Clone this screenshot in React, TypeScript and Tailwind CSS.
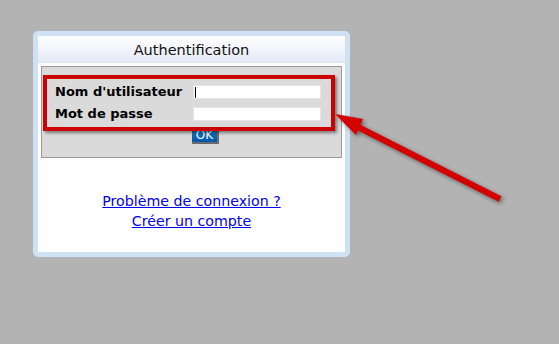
import React from 'react';

const LoginBox: React.FC = () => {
  return (
    <div className="w-[317px] h-[226px] border-[5px] border-[#cfe1f4] rounded-[5px] bg-white">
      <div className="h-[27px] bg-gradient-to-b from-white to-[#e4e9f6] border-b border-[#dfe4f1] text-center text-[14.5px] leading-[28px] text-[#111]">
        Authentification
      </div>
      <div className="mx-[3px] mt-[3px] h-[92px] border border-[#9a9a9a] bg-[#d9dad9] pl-[13px] pt-[14px]">
        <div className="grid grid-cols-[138px_128px]">
          <div className="h-[22px] flex items-center font-bold text-[13px] text-black">Nom d'utilisateur</div>
          <div className="h-[22px] flex items-center">
            <div className="w-[128px] h-[14px] bg-white border border-[#e6e6e6] flex items-center pl-[1px]">
              <div className="w-px h-[11px] bg-black" />
            </div>
          </div>
          <div className="h-[22px] flex items-center font-bold text-[13px] text-black">Mot de passe</div>
          <div className="h-[22px] flex items-center">
            <div className="w-[128px] h-[14px] bg-white border border-[#e6e6e6]" />
          </div>
          <div />
          <div className="pt-[2px] -ml-px">
            <div className="w-[27px] h-[17px] bg-gradient-to-b from-[#1f84d0] to-[#0058a8] border-r-2 border-b-2 border-[#6b6b6b] text-white text-[12px] leading-[16px] text-center">
              OK
            </div>
          </div>
        </div>
      </div>
      <div className="mt-[33px] flex flex-col items-center text-[14.2px] leading-[20px]">
        <a className="text-[#0000ee] underline" href="#">Problème de connexion ?</a>
        <a className="text-[#0000ee] underline" href="#">Créer un compte</a>
      </div>
    </div>
  );
};

export default function App() {
  return (
    <div
      className="relative w-[559px] h-[344px] bg-[#b3b3b3] pt-[31px] pl-[33px] overflow-hidden"
      style={{ fontFamily: '"DejaVu Sans", Verdana, sans-serif' }}
    >
      <LoginBox />
      {/* annotation overlay */}
      <div className="absolute left-[43px] top-[75px] w-[292px] h-[56px] border-4 border-[#cc0000] shadow-[2px_2px_3px_rgba(0,0,0,0.45)]" />
      <svg
        className="absolute left-0 top-0"
        width="559"
        height="344"
        style={{ filter: 'drop-shadow(2px 2px 2px rgba(0,0,0,0.45))' }}
      >
        <line x1="500" y1="199" x2="352" y2="124" stroke="#d40000" strokeWidth="6" />
        <polygon points="335,114 363,119 356,135" fill="#d40000" />
      </svg>
    </div>
  );
}
